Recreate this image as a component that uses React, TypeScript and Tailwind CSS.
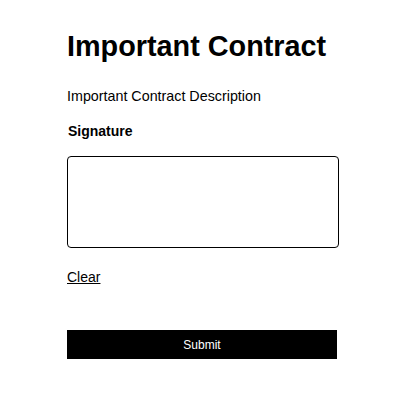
export default function App() {
  return (
    <main className="min-h-screen bg-white font-['Liberation_Sans',Arial,sans-serif] text-black">
      <div className="flex flex-col items-start pl-[67px] pt-[30px]">
        <h1 className="text-[28.8px] leading-[32px] font-bold">Important Contract</h1>
        <p className="mt-[26px] text-[14.3px] leading-[16px]">Important Contract Description</p>
        <label className="mt-[19px] text-[14px] leading-[16px] font-bold pl-px">Signature</label>
        <div className="mt-[17px] w-[272px] h-[92px] border border-black rounded-[4px]" />
        <button className="mt-[21px] text-[14px] leading-[16px] underline underline-offset-[1px]">Clear</button>
        <button className="mt-[45px] w-[270px] h-[29px] bg-black text-white text-[12px]">Submit</button>
      </div>
    </main>
  );
}
